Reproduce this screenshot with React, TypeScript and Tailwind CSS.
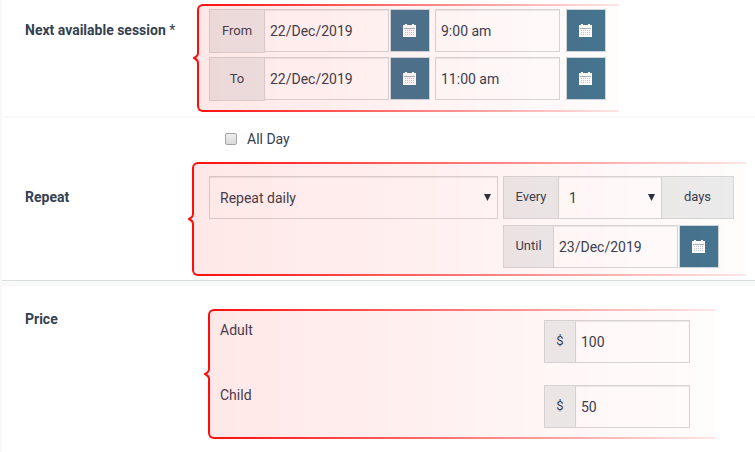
import React, { useState } from 'react';

const boxClass =
  'h-[43px] border border-[#d5d9da] bg-white text-sm text-[#344150] shadow-[inset_0_1px_1px_rgba(0,0,0,0.08)] outline-none';

const CalendarIcon = () => (
  <svg viewBox="0 0 13 13" className="h-[13px] w-[13px]" shapeRendering="crispEdges" aria-hidden="true">
    <path d="M0 1h13v12H0z" fill="#fff" />
    <path d="M2 0h2v1H2zM9 0h2v1H9z" fill="#fff" />
    <path d="M1 4h11v1H1z" fill="#9db2bf" />
    <path
      d="M2 6h1v1H2zM4 6h1v1H4zM6 6h1v1H6zM8 6h1v1H8zM10 6h1v1h-1zM2 8h1v1H2zM4 8h1v1H4zM6 8h1v1H6zM8 8h1v1H8zM10 8h1v1h-1zM2 10h1v1H2zM4 10h1v1H4zM6 10h1v1H6zM8 10h1v1H8zM10 10h1v1h-1z"
      fill="#b9cad4"
    />
  </svg>
);

const CalendarButton: React.FC<{ label: string }> = ({ label }) => (
  <button
    type="button"
    aria-label={label}
    className="flex h-[43px] w-10 shrink-0 items-center justify-center border border-[#d0d8dc] bg-[#447590] pr-px"
  >
    <CalendarIcon />
  </button>
);

interface BracketProps {
  className: string;
  children: React.ReactNode;
}

// Red callout laid over a group of fields, fading out to the right
const Bracket: React.FC<BracketProps> = ({ className, children }) => (
  <div className={`relative ${className}`}>
    {children}
    <div className="pointer-events-none absolute inset-0 flex flex-col [mask-image:linear-gradient(to_right,black,rgba(0,0,0,0.1))]">
      <div className="ml-1 flex-1 rounded-tl-md border-t-2 border-l-2 border-[#ff0a0a] bg-[#ff1414]/10" />
      <div className="flex h-[10px]">
        <svg viewBox="0 0 6 10" className="h-[10px] w-[6px]" aria-hidden="true">
          <path d="M5 0C5 3 3 4 0 5C3 6 5 7 5 10H6V0z" fill="#ff1414" fillOpacity="0.1" />
          <path d="M5 0C5 3 3 4 1 5C3 6 5 7 5 10" fill="none" stroke="#ff0a0a" strokeWidth="2" />
        </svg>
        <div className="flex-1 bg-[#ff1414]/10" />
      </div>
      <div className="ml-1 flex-1 rounded-bl-md border-b-2 border-l-2 border-[#ff0a0a] bg-[#ff1414]/10" />
    </div>
  </div>
);

interface SelectProps {
  label: string;
  options: string[];
  className: string;
}

const Select: React.FC<SelectProps> = ({ label, options, className }) => (
  <div className={`relative ${className}`}>
    <select aria-label={label} className={`${boxClass} w-full appearance-none pr-6 pl-[10px]`}>
      {options.map((option) => (
        <option key={option}>{option}</option>
      ))}
    </select>
    <svg viewBox="0 0 7 7" className="pointer-events-none absolute top-[18px] right-[7px] h-[7px] w-[7px]" aria-hidden="true">
      <path d="M0 0h7L3.500 7z" fill="#26303c" />
    </svg>
  </div>
);

const addonClass =
  'flex shrink-0 items-center justify-center border border-[#d5d9da] bg-[#ebeeee] text-[13px] text-[#344150]';

interface SessionRowProps {
  id: string;
  label: string;
  date: string;
  time: string;
}

const SessionRow: React.FC<SessionRowProps> = ({ id, label, date, time }) => (
  <div className="flex items-start">
    <label htmlFor={id} className={`${addonClass} -mr-px h-11 w-14`}>
      {label}
    </label>
    <input id={id} defaultValue={date} className={`${boxClass} mr-px w-[125px] px-[5px]`} />
    <CalendarButton label={`Pick ${label} date`} />
    <input aria-label={`${label} time`} defaultValue={time} className={`${boxClass} mr-[6px] ml-[5px] w-[125px] px-[5px]`} />
    <CalendarButton label={`Pick ${label} time`} />
  </div>
);

const PriceRow: React.FC<{ id: string; label: string; price: string }> = ({ id, label, price }) => (
  <div className="flex items-start justify-between">
    <label htmlFor={id} className="text-sm leading-5">
      {label}
    </label>
    <div className="flex">
      <span className={`${addonClass} -mr-px h-[43px] w-8`}>$</span>
      <input id={id} defaultValue={price} className={`${boxClass} w-[115px] px-[5px]`} />
    </div>
  </div>
);

const App: React.FC = () => {
  const [allDay, setAllDay] = useState(false);

  return (
    <form className="min-h-screen border-l-2 border-[#f9f9f9] bg-white font-['Roboto',sans-serif] text-sm text-[#344150]">
      {/* Session */}
      <section className="flex items-start border-b-2 border-[#f9f9f9] pt-1 pb-1">
        <h2 className="w-[189px] shrink-0 pt-4 pl-[23px] leading-5 font-bold">
          Next available session <span className="font-normal">*</span>
        </h2>
        <Bracket className="ml-[2px] flex flex-col gap-1 pt-[5px] pr-[13px] pb-[11px] pl-4">
          <SessionRow id="from" label="From" date="22/Dec/2019" time="9:00 am" />
          <SessionRow id="to" label="To" date="22/Dec/2019" time="11:00 am" />
        </Bracket>
      </section>

      {/* Repeat */}
      <section className="border-b border-[#d8dddd] pb-1">
        <label className="ml-[223px] flex items-center gap-[10px] pt-[11px] leading-5">
          <input
            type="checkbox"
            checked={allDay}
            onChange={(e) => setAllDay(e.target.checked)}
            className="h-3 w-3 appearance-none rounded-xs border border-[#a3a3a3] bg-linear-to-b from-[#eeeeee] to-[#dadada] checked:bg-[#447590]"
          />
          All Day
        </label>
        <div className="mt-[13px] flex items-start">
          <h2 className="w-[186px] shrink-0 pt-[25px] pl-[23px] leading-5 font-bold">Repeat</h2>
          <Bracket className="mr-[9px] flex flex-1 items-start gap-[5px] pt-[14px] pr-3 pb-2 pl-[21px]">
            <Select label="Repeat" options={['Repeat daily', 'Repeat weekly']} className="flex-1" />
            <div className="flex flex-col gap-[6px]">
              <div className="flex">
                <span className={`${addonClass} -mr-px h-[43px] w-14`}>Every</span>
                <Select label="Every" options={['1', '2', '3']} className="w-[104px]" />
                <span className={`${addonClass} -ml-px h-[43px] w-[73px]`}>days</span>
              </div>
              <div className="flex">
                <label htmlFor="until" className={`${addonClass} -mr-px h-[43px] w-[51px]`}>
                  Until
                </label>
                <input id="until" defaultValue="23/Dec/2019" className={`${boxClass} mr-px w-[125px] px-[5px]`} />
                <CalendarButton label="Pick until date" />
              </div>
            </div>
          </Bracket>
        </div>
      </section>

      {/* Price */}
      <section className="flex items-start border-t-[5px] border-[#f9f9f9] pt-[23px]">
        <h2 className="w-[202px] shrink-0 pl-[23px] leading-5 font-bold">Price</h2>
        <Bracket className="mr-10 flex flex-1 flex-col gap-[22px] pt-[11px] pr-[25px] pb-[11px] pl-4">
          <PriceRow id="adult" label="Adult" price="100" />
          <PriceRow id="child" label="Child" price="50" />
        </Bracket>
      </section>
    </form>
  );
};

export default App;
